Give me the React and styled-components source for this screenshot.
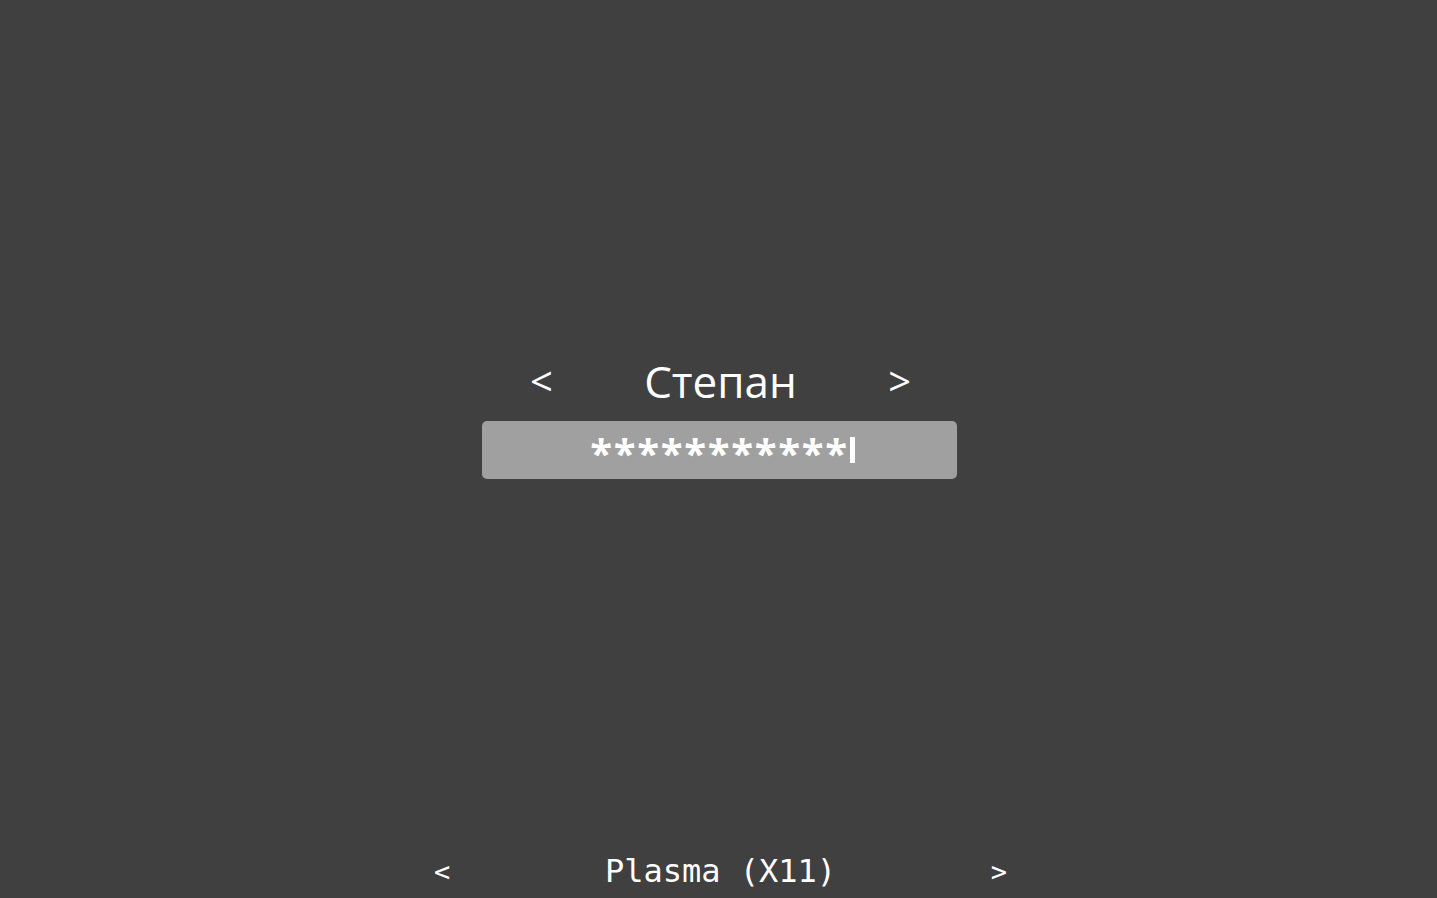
import styled, { createGlobalStyle } from 'styled-components';

const GlobalStyle = createGlobalStyle`
  html, body {
    margin: 0;
    padding: 0;
    background: #404040;
  }
`;

const Screen = styled.div`
  height: 100vh;
  display: flex;
  flex-direction: column;
  align-items: center;
  color: #ffffff;
  overflow: hidden;
`;

const LoginBox = styled.div`
  flex: 1;
  display: flex;
  flex-direction: column;
  align-items: center;
  padding-top: 356px;
`;

const UserRow = styled.div`
  width: 381px;
  height: 50px;
  margin-left: 4px;
  display: flex;
  align-items: center;
  justify-content: space-between;
  font-family: "Open Sans", "Noto Sans", sans-serif;
  line-height: 50px;
`;

const Arrow = styled.span`
  display: inline-block;
  font-size: ${(p) => p.size || '40px'};
`;

const UserName = styled.span`
  font-size: 44px;
`;

const PasswordField = styled.div`
  margin-top: 15px;
  margin-left: 2px;
  width: 475px;
  height: 58px;
  border-radius: 5px;
  background: #a0a0a0;
  display: flex;
  align-items: center;
  justify-content: center;
  font-family: "Open Sans", "Noto Sans", sans-serif;
  font-size: 40px;
`;

const Masked = styled.span`
  letter-spacing: 1.7px;
  line-height: 1;
  margin-top: 5px;
  margin-left: 6px;
  font-weight: 700;
`;

const Cursor = styled.span`
  display: inline-block;
  width: 5px;
  height: 26px;
  margin-left: 1px;
  background: #ffffff;
`;

const SessionRow = styled.div`
  width: 573px;
  height: 54px;
  margin-left: 4px;
  display: flex;
  align-items: center;
  justify-content: space-between;
  font-family: "DejaVu Sans Mono", "Liberation Mono", monospace;
  font-size: 32px;
`;

export default function App() {
  return (
    <Screen>
      <GlobalStyle />
      <LoginBox>
        <UserRow>
          <Arrow>&lt;</Arrow>
          <UserName>Степан</UserName>
          <Arrow>&gt;</Arrow>
        </UserRow>
        <PasswordField>
          <Masked>***********</Masked>
          <Cursor />
        </PasswordField>
      </LoginBox>
      <SessionRow>
        <Arrow size="27px">&lt;</Arrow>
        <span>Plasma (X11)</span>
        <Arrow size="27px">&gt;</Arrow>
      </SessionRow>
    </Screen>
  );
}
